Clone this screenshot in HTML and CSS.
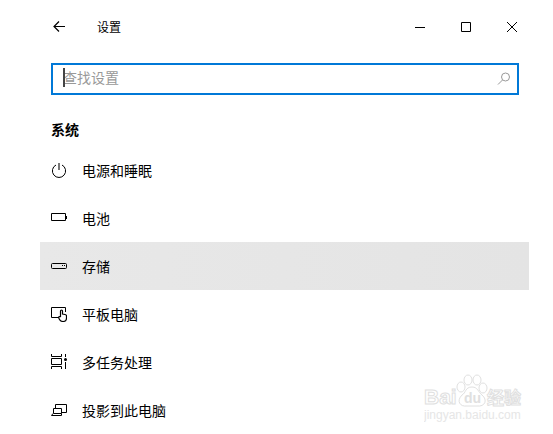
FILE: index.html
```html
<!DOCTYPE html>
<html lang="zh-CN">
<head>
  <meta charset="utf-8">
  <title>设置</title>
  <link rel="stylesheet" href="styles.css">
</head>
<body>
  <header class="titlebar">
    <button class="back-button" type="button" aria-label="返回">
      <svg class="icon" viewBox="0 0 16 16"><path class="arrow" d="M2.5 7.5H14M8 2.5L3 7.5L8 12.5"/></svg>
    </button>
    <h1 class="title">设置</h1>
    <div class="window-controls">
      <button class="window-button" type="button" aria-label="最小化">
        <svg class="icon-small" viewBox="0 0 10 10"><path d="M0 5.5H10"/></svg>
      </button>
      <button class="window-button" type="button" aria-label="最大化">
        <svg class="icon-small" viewBox="0 0 10 10"><path d="M.5 .5H9.5V9.5H.5Z"/></svg>
      </button>
      <button class="window-button" type="button" aria-label="关闭">
        <svg class="icon-small" viewBox="0 0 10 10"><path d="M0 0L10 10M10 0L0 10"/></svg>
      </button>
    </div>
  </header>

  <main class="content">
    <div class="search">
      <input class="search-input" type="text" placeholder="查找设置" aria-label="查找设置">
      <span class="caret"></span>
      <svg class="search-icon" viewBox="0 0 14 14"><circle cx="8.5" cy="5" r="4"/><path d="M5.5 8L1 12.5"/></svg>
    </div>

    <h2 class="section-title">系统</h2>

    <nav class="menu">
      <a class="menu-item" href="#power">
        <svg class="icon" viewBox="0 0 16 16"><path d="M5 3A6.6 6.6 0 1 0 11 3"/><path class="gray" d="M8 1V8"/></svg>
        <span>电源和睡眠</span>
      </a>
      <a class="menu-item" href="#battery">
        <svg class="icon" viewBox="0 0 16 16"><path d="M.5 3.5H14.5V10.5H.5ZM15.5 6V9"/></svg>
        <span>电池</span>
      </a>
      <a class="menu-item selected" href="#storage">
        <svg class="icon" viewBox="0 0 16 16"><rect x=".5" y="5.5" width="15" height="5" rx="1"/><path d="M11 7.5H12M13 7.5H14"/></svg>
        <span>存储</span>
      </a>
      <a class="menu-item" href="#tablet">
        <svg class="icon" viewBox="0 0 16 16"><path d="M7 11.5H.5V1.5H14.5V6"/><path class="hand" d="M9.5 11V5Q9.5 4 10.5 4T11.5 5V8L14 8.5Q15.5 8.8 15.5 10V12Q15.5 15.5 12 15.5Q9.5 15.5 8.5 13.5L7.5 11.5Q8 10 9.5 11"/></svg>
        <span>平板电脑</span>
      </a>
      <a class="menu-item" href="#multitasking">
        <svg class="icon" viewBox="0 0 16 16"><path d="M.5 0V2.5H10.5V0M.5 4.5H10.5V10.5H.5ZM.5 15V12.5H10.5V15M14.5 0V3M14.5 8V15"/><circle class="dot" cx="14.5" cy="5.5" r="1.5"/></svg>
        <span>多任务处理</span>
      </a>
      <a class="menu-item" href="#projecting">
        <svg class="icon" viewBox="0 0 16 16"><path d="M4.5 6V2.5H15.5V10.5H11M2.5 6.5H10.5V11.5H2.5ZM2 11.5L.5 13.5H10.5V11.5"/></svg>
        <span>投影到此电脑</span>
      </a>
    </nav>
  </main>

  <svg class="watermark" viewBox="0 0 100 48">
    <text class="brand" x="0" y="30">Bai</text>
    <path d="M48 13C41 13 42 19 38 21C32 27 36 33 43 32H53C61 33 64 26 58 21C54 18 54 13 48 13Z"/>
    <ellipse cx="37" cy="13" rx="4" ry="5"/>
    <ellipse cx="44" cy="6" rx="4" ry="5"/>
    <ellipse cx="53" cy="6" rx="4" ry="5"/>
    <ellipse cx="59" cy="14" rx="4" ry="5"/>
    <text class="du" x="40" y="29">du</text>
    <text class="brand-cn" x="63" y="30">经验</text>
    <text class="site" x="0" y="45">jingyan.baidu.com</text>
  </svg>
</body>
</html>
```

FILE: styles.css
```css
* {
  box-sizing: border-box;
}

body {
  margin: 0;
  background: #fff;
  color: #000;
  font-family: "Noto Sans CJK SC", sans-serif;
  font-size: 14px;
  line-height: 20px;
}

button {
  border: none;
  padding: 0;
  background: none;
}

svg {
  fill: none;
  stroke: #000;
  stroke-width: 1;
}

.titlebar {
  display: flex;
  align-items: center;
  height: 54px;
  padding: 0 18px 0 51px;
}

.back-button {
  display: flex;
  margin-right: 30px;
}

.title {
  margin: 0;
  font-size: 12px;
  font-weight: 400;
}

.window-controls {
  display: flex;
  margin-left: auto;
}

.window-button {
  display: flex;
  align-items: center;
  justify-content: center;
  width: 46px;
  height: 32px;
}

.window-button:hover {
  background: #e5e5e5;
}

.icon {
  flex: none;
  width: 16px;
  height: 16px;
}

.icon-small {
  width: 10px;
  height: 10px;
}

.arrow,
.hand {
  stroke-width: 1.2;
}

.gray {
  stroke: #777;
  stroke-width: 2;
}

.dot {
  fill: #000;
  stroke: none;
}

.content {
  padding: 9px 24px 0 40px;
}

.search {
  position: relative;
  display: flex;
  align-items: center;
  height: 32px;
  margin: 0 10px 0 11px;
  padding: 0 6px 0 10px;
  border: 2px solid #0078d7;
}

.search-input {
  flex: 1;
  min-width: 0;
  padding: 0 0 4px;
  border: none;
  outline: none;
  background: none;
  font: inherit;
}

.search-input::placeholder {
  color: #999;
}

.caret {
  position: absolute;
  top: 3px;
  left: 10px;
  width: 2px;
  height: 19px;
  background: #444;
}

.search-icon {
  width: 14px;
  height: 14px;
  stroke: #999;
}

.section-title {
  margin: 24px 11px 7px;
  font-size: 14px;
  font-weight: 700;
}

.menu-item {
  display: flex;
  align-items: center;
  gap: 15px;
  height: 48px;
  padding: 0 11px;
  color: #000;
  text-decoration: none;
}

.menu-item.selected {
  background: linear-gradient(to right, #e8e8e8, #e4e4e4);
}

.watermark {
  position: absolute;
  right: 29px;
  bottom: 12px;
  width: 100px;
  height: 48px;
  fill: #fff;
  stroke: #e0e0e0;
  pointer-events: none;
}

.brand,
.du,
.site {
  font-family: "Liberation Sans", Arial, sans-serif;
}

.brand {
  font-size: 21px;
  font-weight: 700;
}

.brand-cn {
  font-size: 17px;
  font-weight: 700;
}

.du {
  font-size: 14px;
  font-weight: 700;
  fill: #e0e0e0;
  stroke: none;
}

.site {
  font-size: 12px;
  fill: #e6e6e6;
  stroke: none;
}
```
